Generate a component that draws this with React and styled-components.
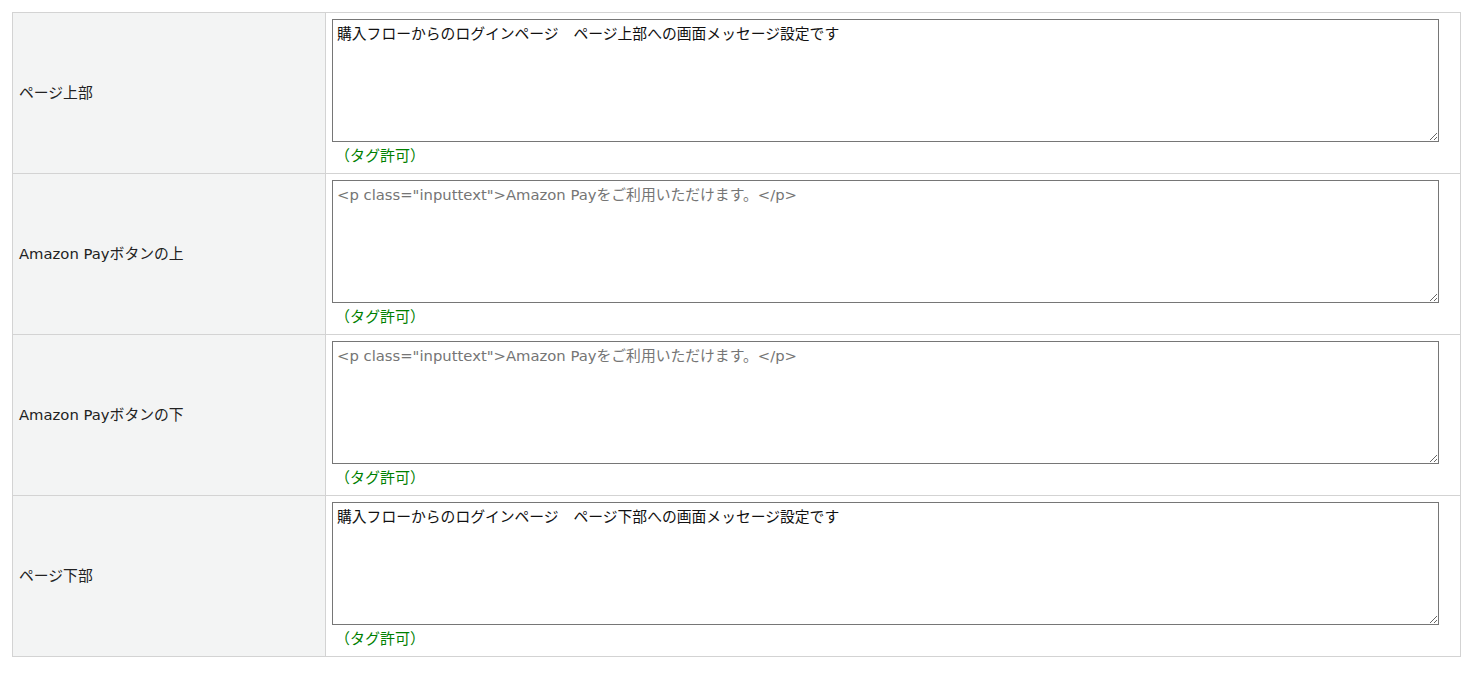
import React from "react";
import styled, { createGlobalStyle } from "styled-components";

const FONT = `"DejaVu Sans", "Noto Sans CJK JP", "Liberation Sans", sans-serif`;

const Global = createGlobalStyle`
  html, body { margin: 0; padding: 0; background: #fff; }
  body {
    font-family: ${FONT};
    font-size: 15px;
    color: #222;
  }
`;

const Wrap = styled.div`
  padding: 12px 12px 16px 12px;
`;

const Table = styled.table`
  width: 1449px;
  border-collapse: collapse;
  border: 1px solid #d3d3d3;
`;

const Row = styled.tr`
  height: 161px;
`;

const Label = styled.th`
  width: 300px;
  background: #f3f4f4;
  border: 1px solid #d3d3d3;
  padding: 0 6px 4px 6px;
  text-align: left;
  font-weight: normal;
  font-family: ${FONT};
  font-size: 14.8px;
  color: #222;
  vertical-align: middle;
`;

const Cell = styled.td`
  border: 1px solid #d3d3d3;
  padding: 6px;
  vertical-align: top;
`;

const Area = styled.textarea`
  display: block;
  box-sizing: border-box;
  width: 1107px;
  height: 123px;
  margin: 0;
  padding: 3px 4px 2px 4px;
  border: 1px solid #767676;
  border-radius: 0;
  font-family: ${FONT};
  font-size: 14.8px;
  line-height: 22px;
  color: #111;
  resize: both;
  &::placeholder { color: #757575; }
`;

const Note = styled.div`
  margin-top: 4px;
  padding-left: 3px;
  line-height: 20px;
  font-family: ${FONT};
  font-size: 15px;
  color: #008000;
`;

const rows = [
  { label: "ページ上部", value: "購入フローからのログインページ　ページ上部への画面メッセージ設定です" },
  { label: "Amazon Payボタンの上", placeholder: '<p class="inputtext">Amazon Payをご利用いただけます。</p>' },
  { label: "Amazon Payボタンの下", placeholder: '<p class="inputtext">Amazon Payをご利用いただけます。</p>' },
  { label: "ページ下部", value: "購入フローからのログインページ　ページ下部への画面メッセージ設定です" },
];

export default function App() {
  return (
    <Wrap>
      <Global />
      <Table>
        <tbody>
          {rows.map((r, i) => (
            <Row key={i}>
              <Label>{r.label}</Label>
              <Cell>
                <Area defaultValue={r.value || ""} placeholder={r.placeholder} />
                <Note>（タグ許可）</Note>
              </Cell>
            </Row>
          ))}
        </tbody>
      </Table>
    </Wrap>
  );
}
